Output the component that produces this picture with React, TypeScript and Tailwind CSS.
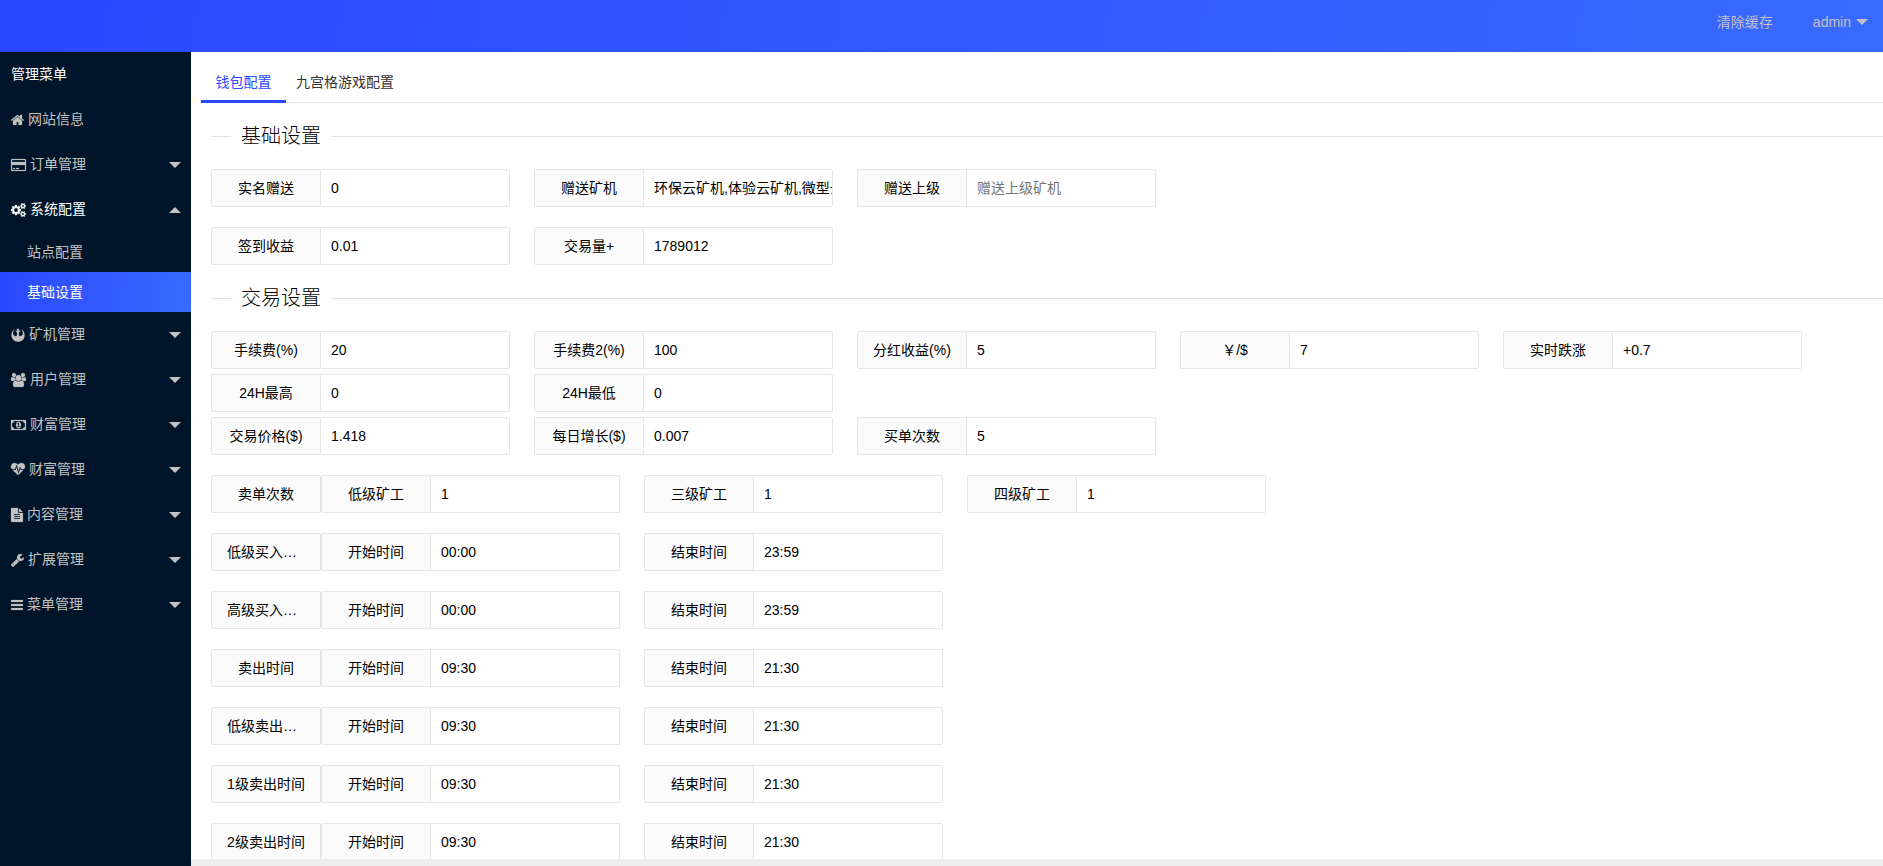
import { useState } from 'react';
import type { ReactNode } from 'react';
import { FaRebel } from 'react-icons/fa';

interface IconShape {
  width: number;
  path: string;
}

interface MenuItem {
  title: string;
  icon: ReactNode;
  children?: string[];
  expandable?: boolean;
}

interface Field {
  id: string;
  label: string;
  value: string;
  placeholder?: string;
}

interface FieldGroup {
  title: string;
  fields: Field[];
}

const icons: Record<string, IconShape> = {
  home: {
    width: 1664,
    path: 'M1408 992v480q0 26-19 45t-45 19h-384v-384h-256v384h-384q-26 0-45-19t-19-45v-480q0-1 .5-3t.5-3l575-474 575 474q1 2 1 6zm223-69l-62 74q-8 9-21 11h-3q-13 0-21-7l-692-577-692 577q-12 8-24 7-13-2-21-11l-62-74q-8-10-7-23.5t11-21.5l719-599q32-26 76-26t76 26l244 204v-195q0-14 9-23t23-9h192q14 0 23 9t9 23v408l219 182q10 8 11 21.5t-7 23.5z',
  },
  card: {
    width: 1920,
    path: 'M1760 128q66 0 113 47t47 113v1216q0 66-47 113t-113 47h-1600q-66 0-113-47t-47-113v-1216q0-66 47-113t113-47h1600zm-1600 128q-13 0-22.5 9.5t-9.5 22.5v224h1664v-224q0-13-9.5-22.5t-22.5-9.5h-1600zm1600 1280q13 0 22.5-9.5t9.5-22.5v-608h-1664v608q0 13 9.5 22.5t22.5 9.5h1600zm-1504-128v-128h256v128h-256zm384 0v-128h384v128h-384z',
  },
  cogs: {
    width: 1920,
    path: 'M896 896q0-106-75-181t-181-75-181 75-75 181 75 181 181 75 181-75 75-181zm768 512q0-52-38-90t-90-38-90 38-38 90q0 53 37.5 90.5t90.5 37.5 90.5-37.5 37.5-90.5zm0-1024q0-52-38-90t-90-38-90 38-38 90q0 53 37.5 90.5t90.5 37.5 90.5-37.5 37.5-90.5zm-384 421v185q0 10-7 19.5t-16 10.5l-155 24q-11 35-32 76 34 48 90 115 7 11 7 20 0 12-7 19-23 30-82.5 89.5t-78.5 59.5q-11 0-21-7l-115-90q-37 19-77 31-11 108-23 155-7 24-30 24h-186q-11 0-20-7.5t-10-17.5l-23-153q-34-10-75-31l-118 89q-7 7-20 7-11 0-21-8-144-133-144-160 0-9 7-19 10-14 41-53t47-61q-23-44-35-82l-152-24q-10-1-17-9.5t-7-19.5v-185q0-10 7-19.5t16-10.5l155-24q11-35 32-76-34-48-90-115-7-11-7-20 0-12 7-20 22-30 82-89t79-59q11 0 21 7l115 90q34-18 77-32 11-108 23-154 7-24 30-24h186q11 0 20 7.5t10 17.5l23 153q34 10 75 31l118-89q8-7 20-7 11 0 21 8 144 133 144 160 0 8-7 19-12 16-42 54t-45 60q23 48 34 82l152 23q10 2 17 10.5t7 19.5zm640 533v140q0 16-149 31-12 27-30 52 51 113 51 138 0 4-4 7-122 71-124 71-8 0-46-47t-52-68q-20 2-30 2t-30-2q-14 21-52 68t-46 47q-2 0-124-71-4-3-4-7 0-25 51-138-18-25-30-52-149-15-149-31v-140q0-16 149-31 13-29 30-52-51-113-51-138 0-4 4-7 4-2 35-20t59-34 30-16q8 0 46 46.5t52 67.5q20-2 30-2t30 2q51-71 92-112l6-2q4 0 124 70 4 3 4 7 0 25-51 138 17 23 30 52 149 15 149 31zm0-1024v140q0 16-149 31-12 27-30 52 51 113 51 138 0 4-4 7-122 71-124 71-8 0-46-47t-52-68q-20 2-30 2t-30-2q-14 21-52 68t-46 47q-2 0-124-71-4-3-4-7 0-25 51-138-18-25-30-52-149-15-149-31v-140q0-16 149-31 13-29 30-52-51-113-51-138 0-4 4-7 4-2 35-20t59-34 30-16q8 0 46 46.5t52 67.5q20-2 30-2t30 2q51-71 92-112l6-2q4 0 124 70 4 3 4 7 0 25-51 138 17 23 30 52 149 15 149 31z',
  },
  users: {
    width: 1920,
    path: 'M593 896q-162 5-265 128h-134q-82 0-138-40.5t-56-118.5q0-353 124-353 6 0 43.5 21t97.5 42.5 119 21.5q67 0 133-23-5 37-5 66 0 139 81 256zm1071 637q0 120-73 189.5t-194 69.5h-874q-121 0-194-69.5t-73-189.5q0-53 3.5-103.5t14-109 26.5-108.5 43-97.5 62-81 85.5-53.5 111.5-20q10 0 43 21.5t73 48 107 48 135 21.5 135-21.5 107-48 73-48 43-21.5q61 0 111.5 20t85.5 53.5 62 81 43 97.5 26.5 108.5 14 109 3.5 103.5zm-1024-1277q0 106-75 181t-181 75-181-75-75-181 75-181 181-75 181 75 75 181zm704 384q0 159-112.5 271.5t-271.5 112.5-271.5-112.5-112.5-271.5 112.5-271.5 271.5-112.5 271.5 112.5 112.5 271.5zm576 225q0 78-56 118.5t-138 40.5h-134q-103-123-265-128 81-117 81-256 0-29-5-66 66 23 133 23 59 0 119-21.5t97.5-42.5 43.5-21q124 0 124 353zm-128-609q0 106-75 181t-181 75-181-75-75-181 75-181 181-75 181 75 75 181z',
  },
  money: {
    width: 1920,
    path: 'M768 1152h384v-96h-128v-448h-114l-148 137 77 80q42-37 55-57h2v288h-128v96zm512-256q0 70-21 142t-59.5 134-101.5 101-138 39-138-39-101.5-101-59.5-134-21-142 21-142 59.5-134 101.5-101 138-39 138 39 101.5 101 59.5 134 21 142zm512 256v-512q-106 0-181-75t-75-181h-1152q0 106-75 181t-181 75v512q106 0 181 75t75 181h1152q0-106 75-181t181-75zm128-832v1152q0 26-19 45t-45 19h-1792q-26 0-45-19t-19-45v-1152q0-26 19-45t45-19h1792q26 0 45 19t19 45z',
  },
  heartbeat: {
    width: 1792,
    path: 'M1280 896h305q-5 6-10 10.5t-9 7.5l-3 4-623 600q-18 18-44 18t-44-18l-624-602q-5-2-21-20h369q22 0 39.5-13.5t22.5-34.5l70-281 190 667q6 20 23 33t39 13q21 0 38-13t23-33l146-485 56 112q18 35 57 35zm512-428q0 145-103 300h-369l-111-221q-8-17-25.5-27t-36.5-8q-45 5-56 46l-129 430-196-686q-6-20-23.5-33t-39.5-13-39 13.5-22 34.5l-116 464h-423q-103-155-103-300 0-220 127-344t351-124q62 0 126.5 21.5t120 58 95.5 68.5 76 68q36-36 76-68t95.5-68.5 120-58 126.5-21.5q224 0 351 124t127 344z',
  },
  file: {
    width: 1536,
    path: 'M1468 476q14 14 28 36h-472v-472q22 14 36 28zm-476 164h544v1056q0 40-28 68t-68 28h-1344q-40 0-68-28t-28-68v-1600q0-40 28-68t68-28h800v544q0 40 28 68t68 28zm160 736v-64q0-14-9-23t-23-9h-704q-14 0-23 9t-9 23v64q0 14 9 23t23 9h704q14 0 23-9t9-23zm0-256v-64q0-14-9-23t-23-9h-704q-14 0-23 9t-9 23v64q0 14 9 23t23 9h704q14 0 23-9t9-23zm0-256v-64q0-14-9-23t-23-9h-704q-14 0-23 9t-9 23v64q0 14 9 23t23 9h704q14 0 23-9t9-23z',
  },
  wrench: {
    width: 1664,
    path: 'M384 1472q0-26-19-45t-45-19-45 19-19 45 19 45 45 19 45-19 19-45zm644-420l-682 682q-37 37-90 37-52 0-91-37l-106-108q-38-36-38-90 0-53 38-91l681-681q39 98 114.5 173.5t173.5 114.5zm634-435q0 39-23 106-47 134-164.5 217.5t-258.5 83.5q-185 0-316.5-131.5t-131.5-316.5 131.5-316.5 316.5-131.5q58 0 121.5 16.5t107.5 46.5q16 11 16 28t-16 28l-293 169v224l193 107q5-3 79-48.5t135.5-81 70.5-35.5q15 0 23.5 10t8.5 25z',
  },
  bars: {
    width: 1536,
    path: 'M1536 1344v128q0 26-19 45t-45 19h-1408q-26 0-45-19t-19-45v-128q0-26 19-45t45-19h1408q26 0 45 19t19 45zm0-512v128q0 26-19 45t-45 19h-1408q-26 0-45-19t-19-45v-128q0-26 19-45t45-19h1408q26 0 45 19t19 45zm0-512v128q0 26-19 45t-45 19h-1408q-26 0-45-19t-19-45v-128q0-26 19-45t45-19h1408q26 0 45 19t19 45z',
  },
};

function Icon({ name }: { name: string }) {
  const icon = icons[name];
  return (
    <svg
      className="h-[14px] w-auto shrink-0 overflow-visible fill-current stroke-current"
      strokeWidth="25"
      viewBox={`0 0 ${icon.width} 1792`}
      aria-hidden="true"
    >
      <path d={icon.path} />
    </svg>
  );
}

function Caret({ up = false }: { up?: boolean }) {
  return (
    <svg className="h-[6px] w-[12px] shrink-0 fill-[#c2c2c2]" viewBox="0 0 12 6" aria-hidden="true">
      <path d={up ? 'M0 6h12l-6-6z' : 'M0 0h12l-6 6z'} />
    </svg>
  );
}

const menu: MenuItem[] = [
  { title: '网站信息', icon: <Icon name="home" /> },
  { title: '订单管理', icon: <Icon name="card" />, expandable: true },
  { title: '系统配置', icon: <Icon name="cogs" />, expandable: true, children: ['站点配置', '基础设置'] },
  { title: '矿机管理', icon: <FaRebel className="size-[14px] shrink-0" />, expandable: true },
  { title: '用户管理', icon: <Icon name="users" />, expandable: true },
  { title: '财富管理', icon: <Icon name="money" />, expandable: true },
  { title: '财富管理', icon: <Icon name="heartbeat" />, expandable: true },
  { title: '内容管理', icon: <Icon name="file" />, expandable: true },
  { title: '扩展管理', icon: <Icon name="wrench" />, expandable: true },
  { title: '菜单管理', icon: <Icon name="bars" />, expandable: true },
];

const tabs = ['钱包配置', '九宫格游戏配置'];

const basicRows: Field[][] = [
  [
    { id: 'real_name_gift', label: '实名赠送', value: '0' },
    { id: 'gift_miner', label: '赠送矿机', value: '环保云矿机,体验云矿机,微型云矿机' },
    { id: 'gift_parent', label: '赠送上级', value: '', placeholder: '赠送上级矿机' },
  ],
  [
    { id: 'sign_income', label: '签到收益', value: '0.01' },
    { id: 'trade_volume', label: '交易量+', value: '1789012' },
  ],
];

const tradeRows: Field[][] = [
  [
    { id: 'fee', label: '手续费(%)', value: '20' },
    { id: 'fee2', label: '手续费2(%)', value: '100' },
    { id: 'dividend', label: '分红收益(%)', value: '5' },
    { id: 'rate', label: '￥/$', value: '7' },
    { id: 'change', label: '实时跌涨', value: '+0.7' },
  ],
  [
    { id: 'high', label: '24H最高', value: '0' },
    { id: 'low', label: '24H最低', value: '0' },
  ],
  [
    { id: 'price', label: '交易价格($)', value: '1.418' },
    { id: 'growth', label: '每日增长($)', value: '0.007' },
    { id: 'buy_times', label: '买单次数', value: '5' },
  ],
];

const timeRange = (id: string, title: string, start: string, end: string): FieldGroup => ({
  title,
  fields: [
    { id: `${id}_start`, label: '开始时间', value: start },
    { id: `${id}_end`, label: '结束时间', value: end },
  ],
});

const groups: FieldGroup[] = [
  {
    title: '卖单次数',
    fields: [
      { id: 'sell_low', label: '低级矿工', value: '1' },
      { id: 'sell_three', label: '三级矿工', value: '1' },
      { id: 'sell_four', label: '四级矿工', value: '1' },
    ],
  },
  timeRange('low_buy', '低级买入时间', '00:00', '23:59'),
  timeRange('high_buy', '高级买入时间', '00:00', '23:59'),
  timeRange('sell', '卖出时间', '09:30', '21:30'),
  timeRange('low_sell', '低级卖出时间', '09:30', '21:30'),
  timeRange('sell_1', '1级卖出时间', '09:30', '21:30'),
  timeRange('sell_2', '2级卖出时间', '09:30', '21:30'),
];

function FormField({ field }: { field: Field }) {
  return (
    <div className="flex h-[38px] w-[299px] shrink-0">
      <label
        htmlFor={field.id}
        className="w-[110px] shrink-0 truncate rounded-l-xs border border-[#e6e6e6] bg-[#fbfbfb] px-[15px] text-center leading-[36px]"
      >
        {field.label}
      </label>
      <input
        id={field.id}
        type="text"
        defaultValue={field.value}
        placeholder={field.placeholder}
        className="min-w-0 flex-1 rounded-r-xs border border-l-0 border-[#e6e6e6] bg-white pl-[10px] outline-none placeholder:text-[#757575]"
      />
    </div>
  );
}

function FormRow({ fields }: { fields: Field[] }) {
  return (
    <div className="flex gap-[24px]">
      {fields.map((field) => (
        <FormField key={field.id} field={field} />
      ))}
    </div>
  );
}

function Section({ title, children }: { title: string; children: ReactNode }) {
  return (
    <fieldset className="min-w-0 border-t border-[#e2e2e2]">
      <legend className="ml-[20px] px-[10px] text-[20px] leading-[30px] font-light">{title}</legend>
      <div className="pt-[18px]">{children}</div>
    </fieldset>
  );
}

function Sidebar() {
  const [active, setActive] = useState('基础设置');

  return (
    <nav className="w-[191px] shrink-0 overflow-hidden bg-[#001529] text-[#c2c2c2]">
      <h1 className="px-[11px] leading-[45px] text-white">管理菜单</h1>
      <ul>
        {menu.map((item, index) => (
          <li key={index}>
            <a
              href="#"
              className={`flex h-[45px] items-center gap-[4px] pr-[10px] pl-[11px] ${item.children ? 'text-white' : ''}`}
            >
              {item.icon}
              <span className="flex-1">{item.title}</span>
              {item.expandable && <Caret up={Boolean(item.children)} />}
            </a>
            {item.children?.map((child) => (
              <a
                key={child}
                href="#"
                onClick={() => setActive(child)}
                className={`block pl-[27px] leading-[40px] ${
                  child === active ? 'bg-[linear-gradient(100deg,#2a48ff,#396aff)] text-white' : ''
                }`}
              >
                {child}
              </a>
            ))}
          </li>
        ))}
      </ul>
    </nav>
  );
}

export default function App() {
  const [tab, setTab] = useState(0);

  return (
    <div className="flex h-screen flex-col overflow-hidden bg-white font-['Liberation_Sans','Noto_Sans_CJK_SC',sans-serif] text-[14px] text-black">
      <header className="flex h-[52px] shrink-0 justify-end gap-[40px] bg-[linear-gradient(100deg,#2a48ff,#396aff)] pr-[15px] leading-[44px] text-[#c2c2c2]">
        <a href="#">清除缓存</a>
        <button type="button" className="flex h-[44px] items-center gap-[5px]">
          admin
          <Caret />
        </button>
      </header>

      <div className="flex min-h-0 flex-1">
        <Sidebar />

        <div className="flex min-w-0 flex-1 flex-col">
          <main className="min-h-0 flex-1 overflow-hidden pt-[10px] pl-[10px]">
            <div role="tablist" className="flex h-[41px] border-b border-[#e2e2e2]">
              {tabs.map((name, index) => (
                <button
                  key={name}
                  type="button"
                  role="tab"
                  aria-selected={index === tab}
                  onClick={() => setTab(index)}
                  className={
                    index === tab
                      ? 'h-[41px] w-[85px] border-b-3 border-[#2a48ff] pt-[3px] text-[#2a48ff]'
                      : 'h-[41px] px-[10px] text-[#333]'
                  }
                >
                  {name}
                </button>
              ))}
            </div>

            <form className="flex flex-col gap-[18px] pt-[18px] pl-[10px]">
              <Section title="基础设置">
                <div className="flex flex-col gap-[20px]">
                  {basicRows.map((fields, index) => (
                    <FormRow key={index} fields={fields} />
                  ))}
                </div>
              </Section>

              <Section title="交易设置">
                <div className="flex flex-col gap-[20px]">
                  <div className="flex flex-col gap-[5px]">
                    {tradeRows.map((fields, index) => (
                      <FormRow key={index} fields={fields} />
                    ))}
                  </div>
                  {groups.map((group) => (
                    <div key={group.title} role="group" aria-label={group.title} className="flex">
                      <span className="h-[38px] w-[110px] shrink-0 truncate rounded-xs border border-[#e6e6e6] bg-[#fbfbfb] px-[15px] text-center leading-[36px]">
                        {group.title}
                      </span>
                      <FormRow fields={group.fields} />
                    </div>
                  ))}
                </div>
              </Section>
            </form>
          </main>
          <div className="h-[7px] shrink-0 bg-[#eee]" />
        </div>
      </div>
    </div>
  );
}
